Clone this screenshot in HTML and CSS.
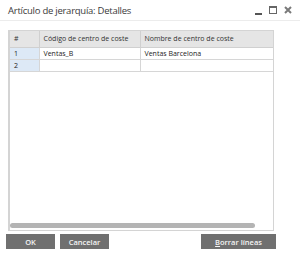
FILE: index.html
```html
<!DOCTYPE html>
<html lang="es">
<head>
    <meta charset="UTF-8">
    <title>Artículo de jerarquía: Detalles</title>
    <link rel="stylesheet" href="styles.css">
</head>
<body>
    <div class="window">
        <div class="titlebar">
            <span class="title">Artículo de jerarquía: Detalles</span>
            <div class="controls">
                <span class="ctl-min"></span>
                <span class="ctl-max"></span>
                <svg class="ctl-close" width="8" height="8" viewBox="0 0 8 8">
                    <path d="M1 1 L7 7 M7 1 L1 7" stroke="#7a7a7a" stroke-width="2"/>
                </svg>
            </div>
        </div>

        <div class="content">
            <div class="grid">
                <table class="matrix">
                    <colgroup>
                        <col class="col-num">
                        <col class="col-code">
                        <col class="col-name">
                    </colgroup>
                    <thead>
                        <tr>
                            <th>#</th>
                            <th>Código de centro de coste</th>
                            <th>Nombre de centro de coste</th>
                        </tr>
                    </thead>
                    <tbody>
                        <tr>
                            <td class="num">1</td>
                            <td>Ventas_B</td>
                            <td>Ventas Barcelona</td>
                        </tr>
                        <tr>
                            <td class="num">2</td>
                            <td></td>
                            <td></td>
                        </tr>
                    </tbody>
                </table>
                <div class="scrollbar"><div class="thumb"></div></div>
            </div>

            <div class="buttons">
                <div class="left-buttons">
                    <button class="btn">OK</button>
                    <button class="btn">Cancelar</button>
                </div>
                <button class="btn btn-wide"><u>B</u>orrar líneas</button>
            </div>
        </div>
    </div>
</body>
</html>
```

FILE: styles.css
```css
* {
    margin: 0;
    padding: 0;
    box-sizing: border-box;
}

body {
    font-family: "Open Sans", "DejaVu Sans", sans-serif;
    background-color: #ffffff;
    color: #333333;
}

.window {
    width: 300px;
    height: 263px;
    background-color: #ffffff;
}

.titlebar {
    height: 21px;
    display: flex;
    align-items: center;
    justify-content: space-between;
    padding: 0 8px 0 8px;
    border-bottom: 1px solid #ececec;
}

.title {
    font-size: 9.5px;
    color: #3a3a3a;
    letter-spacing: -0.25px;
}

.controls {
    display: flex;
    align-items: center;
    gap: 7px;
}

.ctl-min {
    width: 7px;
    height: 2px;
    margin-top: 7px;
    background-color: #555555;
}

.ctl-max {
    width: 8px;
    height: 8px;
    border: 1px solid #666666;
    border-top-width: 2px;
}

.content {
    padding: 9px 26px 0 8px;
}

.grid {
    height: 201px;
    border: 1px solid #d4d4d4;
    border-left-width: 2px;
    display: flex;
    flex-direction: column;
    justify-content: space-between;
}

.matrix {
    width: 100%;
    border-collapse: collapse;
    table-layout: fixed;
    font-size: 7px;
    color: #222222;
}

.col-num {
    width: 29px;
}

.col-code {
    width: 101px;
}

.matrix th {
    height: 16px;
    background-color: #e5e5e5;
    font-weight: normal;
    text-align: left;
    padding: 0 4px;
    border-right: 1px solid #d0d0d0;
    border-bottom: 1px solid #d0d0d0;
    color: #333333;
}

.matrix td {
    height: 12px;
    padding: 0 4px;
    border-right: 1px solid #d6d6d6;
    border-bottom: 1px solid #d6d6d6;
    white-space: nowrap;
}

.matrix th:last-child,
.matrix td:last-child {
    border-right: none;
}

.matrix td.num {
    background-color: #dde9f6;
}

.scrollbar {
    height: 8px;
    padding: 1px 18px 2px 0;
}

.thumb {
    height: 5px;
    border-radius: 3px;
    background-color: #b4b4b4;
}

.buttons {
    display: flex;
    justify-content: space-between;
    padding: 3px 0 0 0;
    margin-left: -2px;
    margin-right: -2px;
}

.left-buttons {
    display: flex;
    gap: 5px;
}

.btn {
    width: 49px;
    height: 15px;
    border: none;
    background-color: #707070;
    color: #f4f4f4;
    font-family: "Open Sans", "DejaVu Sans", sans-serif;
    font-size: 7.5px;
    font-weight: 600;
}

.btn-wide {
    width: 75px;
}
```
